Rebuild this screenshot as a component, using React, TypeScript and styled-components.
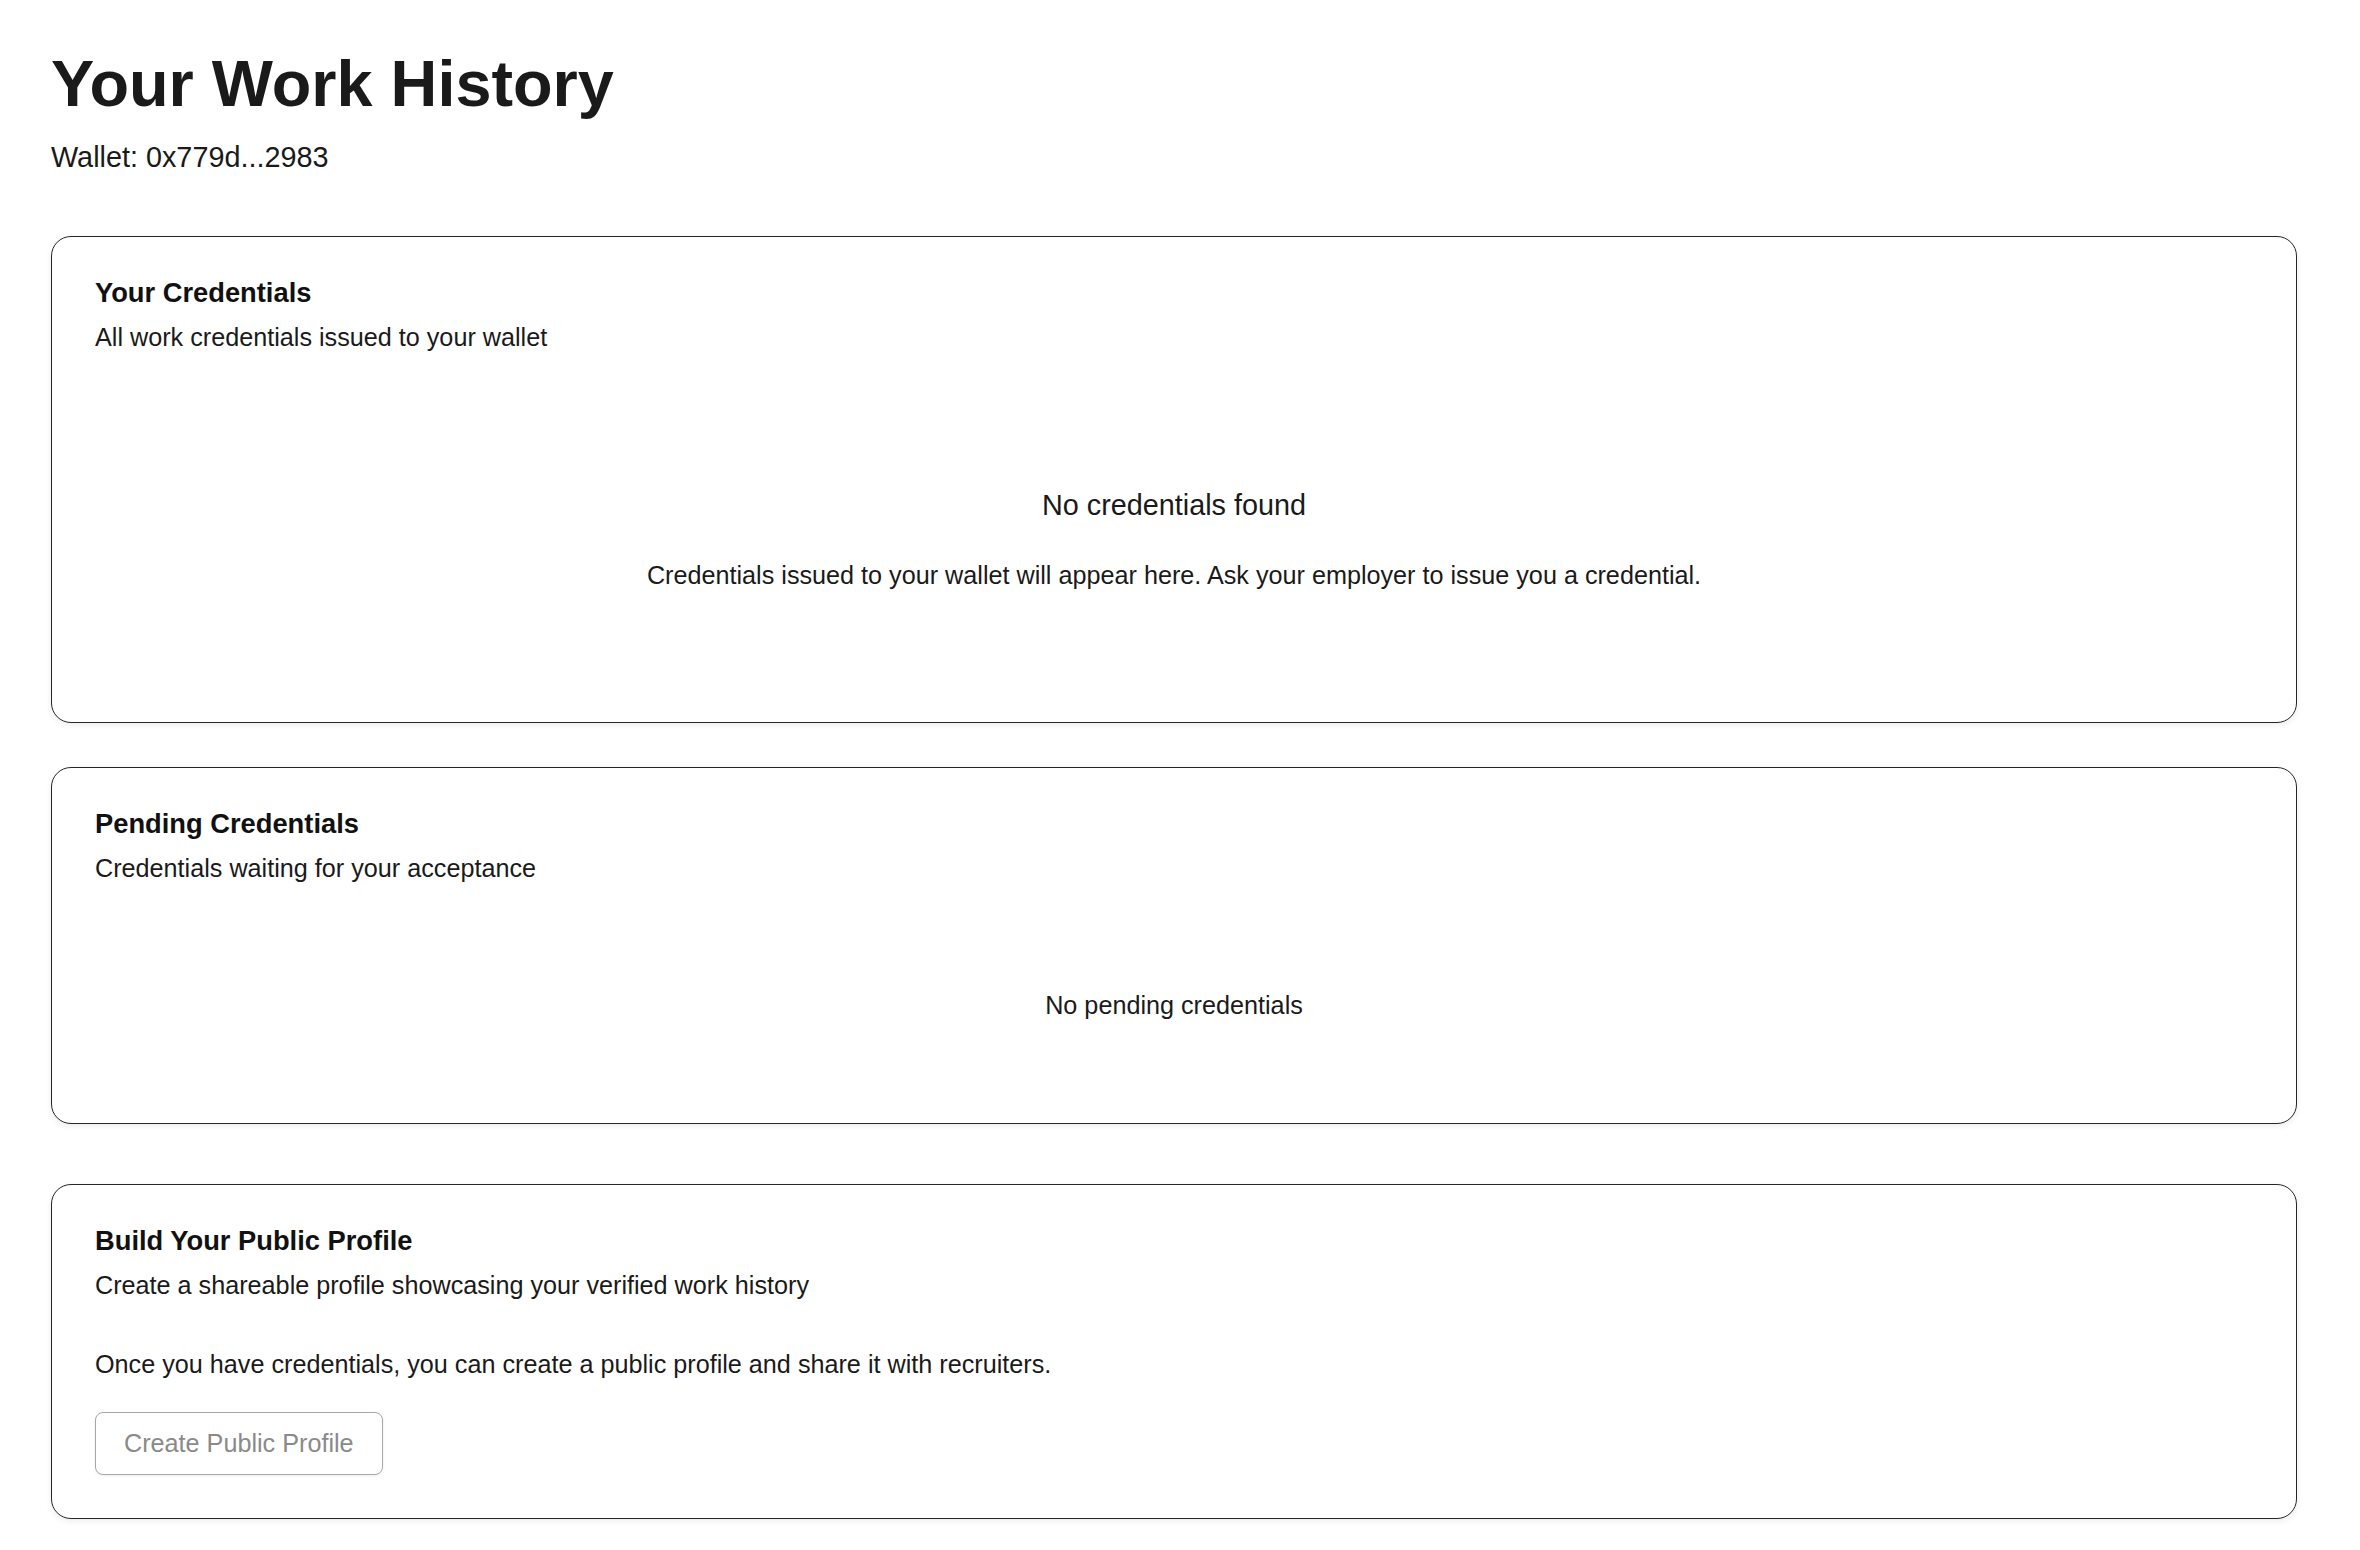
import React from "react";
import styled, { createGlobalStyle } from "styled-components";

const GlobalStyle = createGlobalStyle`
  html, body {
    margin: 0;
    padding: 0;
    background: #ffffff;
  }
  body {
    font-family: "Liberation Sans", Arial, Helvetica, sans-serif;
    color: #1a1a1a;
  }
  * {
    box-sizing: border-box;
  }
`;

export default function App() {
  const walletAddress = "0x779d...2983";
  return (
    <>
      <GlobalStyle />
      <Page>
        <PageHeader>
          <h1>Your Work History</h1>
          <p>Wallet: {walletAddress}</p>
        </PageHeader>

        <Card>
          <CardHeader>
            <h2>Your Credentials</h2>
            <p>All work credentials issued to your wallet</p>
          </CardHeader>
          <EmptyState padY={92}>
            <h3>No credentials found</h3>
            <p>
              Credentials issued to your wallet will appear here. Ask your
              employer to issue you a credential.
            </p>
          </EmptyState>
        </Card>

        <Card>
          <CardHeader>
            <h2>Pending Credentials</h2>
            <p>Credentials waiting for your acceptance</p>
          </CardHeader>
          <EmptyState padY={63}>
            <p>No pending credentials</p>
          </EmptyState>
        </Card>

        <Card spaced>
          <CardHeader>
            <h2>Build Your Public Profile</h2>
            <p>Create a shareable profile showcasing your verified work history</p>
          </CardHeader>
          <ProfileBody>
            <p>
              Once you have credentials, you can create a public profile and
              share it with recruiters.
            </p>
            <OutlineButton disabled>Create Public Profile</OutlineButton>
          </ProfileBody>
        </Card>
      </Page>
    </>
  );
}

const Page = styled.main`
  display: flex;
  flex-direction: column;
  gap: 44px;
  padding: 48px 63px 40px 51px;
`;

const PageHeader = styled.header`
  margin-bottom: 18px;
  h1 {
    margin: 0;
    font-size: 64.8px;
    line-height: 72px;
    font-weight: 700;
    color: #1a1a1a;
  }
  p {
    margin: 20px 0 0;
    font-size: 28.8px;
    line-height: 34px;
    color: #1a1a1a;
  }
`;

const Card = styled.section<{ spaced?: boolean }>`
  border: 1px solid #262626;
  border-radius: 20px;
  padding: 40px 43px;
  background: #fff;
  box-shadow: 0 2px 6px rgba(0, 0, 0, 0.08);
  margin-top: ${(props) => (props.spaced ? "16px" : "0")};
`;

const CardHeader = styled.div`
  margin-bottom: 44px;
  h2 {
    margin: 0;
    font-size: 27.3px;
    line-height: 32px;
    font-weight: 700;
    color: #111;
  }
  p {
    margin: 13px 0 0;
    font-size: 25.2px;
    line-height: 30px;
    color: #1a1a1a;
  }
`;

const EmptyState = styled.div<{ padY: number }>`
  padding: ${(props) => props.padY}px 0;
  text-align: center;
  h3 {
    margin: 0 0 38px;
    font-size: 28.8px;
    line-height: 34px;
    font-weight: 400;
    color: #1a1a1a;
  }
  p {
    margin: 0;
    font-size: 25.2px;
    line-height: 30px;
    color: #1a1a1a;
  }
`;

const ProfileBody = styled.div`
  display: flex;
  flex-direction: column;
  align-items: flex-start;
  gap: 33px;
  padding: 5px 0 3px;
  p {
    margin: 0;
    font-size: 25.2px;
    line-height: 30px;
    color: #1a1a1a;
  }
`;

const OutlineButton = styled.button`
  font-family: inherit;
  font-size: 25.2px;
  line-height: 29px;
  padding: 16px 28px;
  border: 1px solid #a8a8a8;
  border-radius: 8px;
  background: #fff;
  color: #8a8a8a;
  box-shadow: 0 1px 3px rgba(0, 0, 0, 0.08);
  cursor: not-allowed;
`;
